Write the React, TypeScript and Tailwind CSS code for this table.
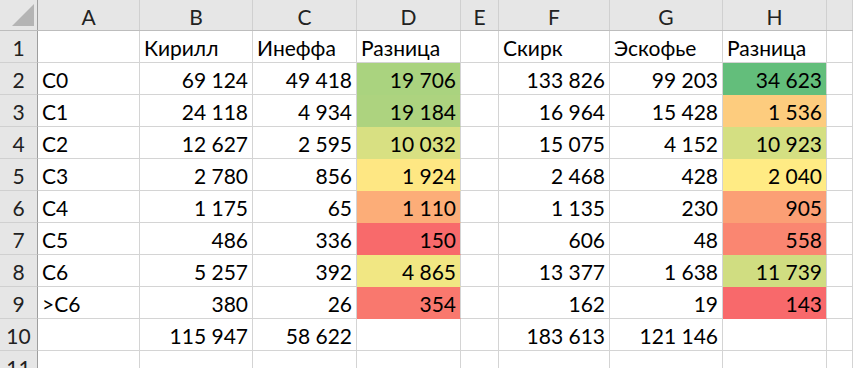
import React from 'react';

const cols = ['A', 'B', 'C', 'D', 'E', 'F', 'G', 'H', ''];
const widths = ['w-[102px]', 'w-[113px]', 'w-[104px]', 'w-[104px]', 'w-[38px]', 'w-[111px]', 'w-[113px]', 'w-[104px]', 'flex-1'];

type Cell = { v: string; bg?: string; left?: boolean };

const rows: Cell[][] = [
  [{ v: '' }, { v: 'Кирилл', left: true }, { v: 'Инеффа', left: true }, { v: 'Разница', left: true }, { v: '' }, { v: 'Скирк', left: true }, { v: 'Эскофье', left: true }, { v: 'Разница', left: true }, { v: '' }],
  [{ v: 'C0', left: true }, { v: '69 124' }, { v: '49 418' }, { v: '19 706', bg: 'bg-[#aad37f]' }, { v: '' }, { v: '133 826' }, { v: '99 203' }, { v: '34 623', bg: 'bg-[#63be7b]' }, { v: '' }],
  [{ v: 'C1', left: true }, { v: '24 118' }, { v: '4 934' }, { v: '19 184', bg: 'bg-[#add37f]' }, { v: '' }, { v: '16 964' }, { v: '15 428' }, { v: '1 536', bg: 'bg-[#fdcc7e]' }, { v: '' }],
  [{ v: 'C2', left: true }, { v: '12 627' }, { v: '2 595' }, { v: '10 032', bg: 'bg-[#d8e082]' }, { v: '' }, { v: '15 075' }, { v: '4 152' }, { v: '10 923', bg: 'bg-[#d4df82]' }, { v: '' }],
  [{ v: 'C3', left: true }, { v: '2 780' }, { v: '856' }, { v: '1 924', bg: 'bg-[#fee783]' }, { v: '' }, { v: '2 468' }, { v: '428' }, { v: '2 040', bg: 'bg-[#ffeb84]' }, { v: '' }],
  [{ v: 'C4', left: true }, { v: '1 175' }, { v: '65' }, { v: '1 110', bg: 'bg-[#fcad78]' }, { v: '' }, { v: '1 135' }, { v: '230' }, { v: '905', bg: 'bg-[#fb9f75]' }, { v: '' }],
  [{ v: 'C5', left: true }, { v: '486' }, { v: '336' }, { v: '150', bg: 'bg-[#f86a6b]' }, { v: '' }, { v: '606' }, { v: '48' }, { v: '558', bg: 'bg-[#fa8671]' }, { v: '' }],
  [{ v: 'C6', left: true }, { v: '5 257' }, { v: '392' }, { v: '4 865', bg: 'bg-[#f1e783]' }, { v: '' }, { v: '13 377' }, { v: '1 638' }, { v: '11 739', bg: 'bg-[#d0dd81]' }, { v: '' }],
  [{ v: '>C6', left: true }, { v: '380' }, { v: '26' }, { v: '354', bg: 'bg-[#f9786e]' }, { v: '' }, { v: '162' }, { v: '19' }, { v: '143', bg: 'bg-[#f8696b]' }, { v: '' }],
  [{ v: '' }, { v: '115 947' }, { v: '58 622' }, { v: '' }, { v: '' }, { v: '183 613' }, { v: '121 146' }, { v: '' }, { v: '' }],
  [{ v: '' }, { v: '' }, { v: '' }, { v: '' }, { v: '' }, { v: '' }, { v: '' }, { v: '' }, { v: '' }],
];

export default function App() {
  return (
    <div className="w-[853px] h-[368px] overflow-hidden bg-white text-black text-[21px] font-['Lato','Liberation_Sans',sans-serif]">
      <div className="flex h-[31px] bg-[#e6e6e6] border-b border-[#bdbdbd]">
        <div className="w-[38px] shrink-0 border-r border-[#9e9e9e] flex items-end justify-end pr-[3px] pb-[4px]">
          <svg width="22" height="22" viewBox="0 0 22 22">
            <polygon points="0,22 22,22 22,0" fill="#b4b4b4" />
          </svg>
        </div>
        {cols.map((c, i) => (
          <div key={i} className={`${widths[i]} shrink-0 border-r border-[#d0d0d0] flex items-center justify-center pt-[3px] text-[#222]`}>
            {c}
          </div>
        ))}
      </div>
      {rows.map((r, ri) => (
        <div key={ri} className="flex h-[32px]">
          <div className="w-[38px] shrink-0 bg-[#e6e6e6] border-r border-b border-r-[#9e9e9e] border-b-[#d0d0d0] flex items-center justify-center pt-[3px] text-[#222]">
            {ri + 1}
          </div>
          {r.map((c, ci) => (
            <div
              key={ci}
              className={`${widths[ci]} shrink-0 border-r border-b border-r-[#d4d4d4] ${c.bg ? `${c.bg} border-b-transparent` : 'border-b-[#d4d4d4]'} flex items-center px-[4px] pt-[3px] whitespace-nowrap ${c.left ? 'justify-start' : 'justify-end'}`}
            >
              {c.v}
            </div>
          ))}
        </div>
      ))}
    </div>
  );
}
